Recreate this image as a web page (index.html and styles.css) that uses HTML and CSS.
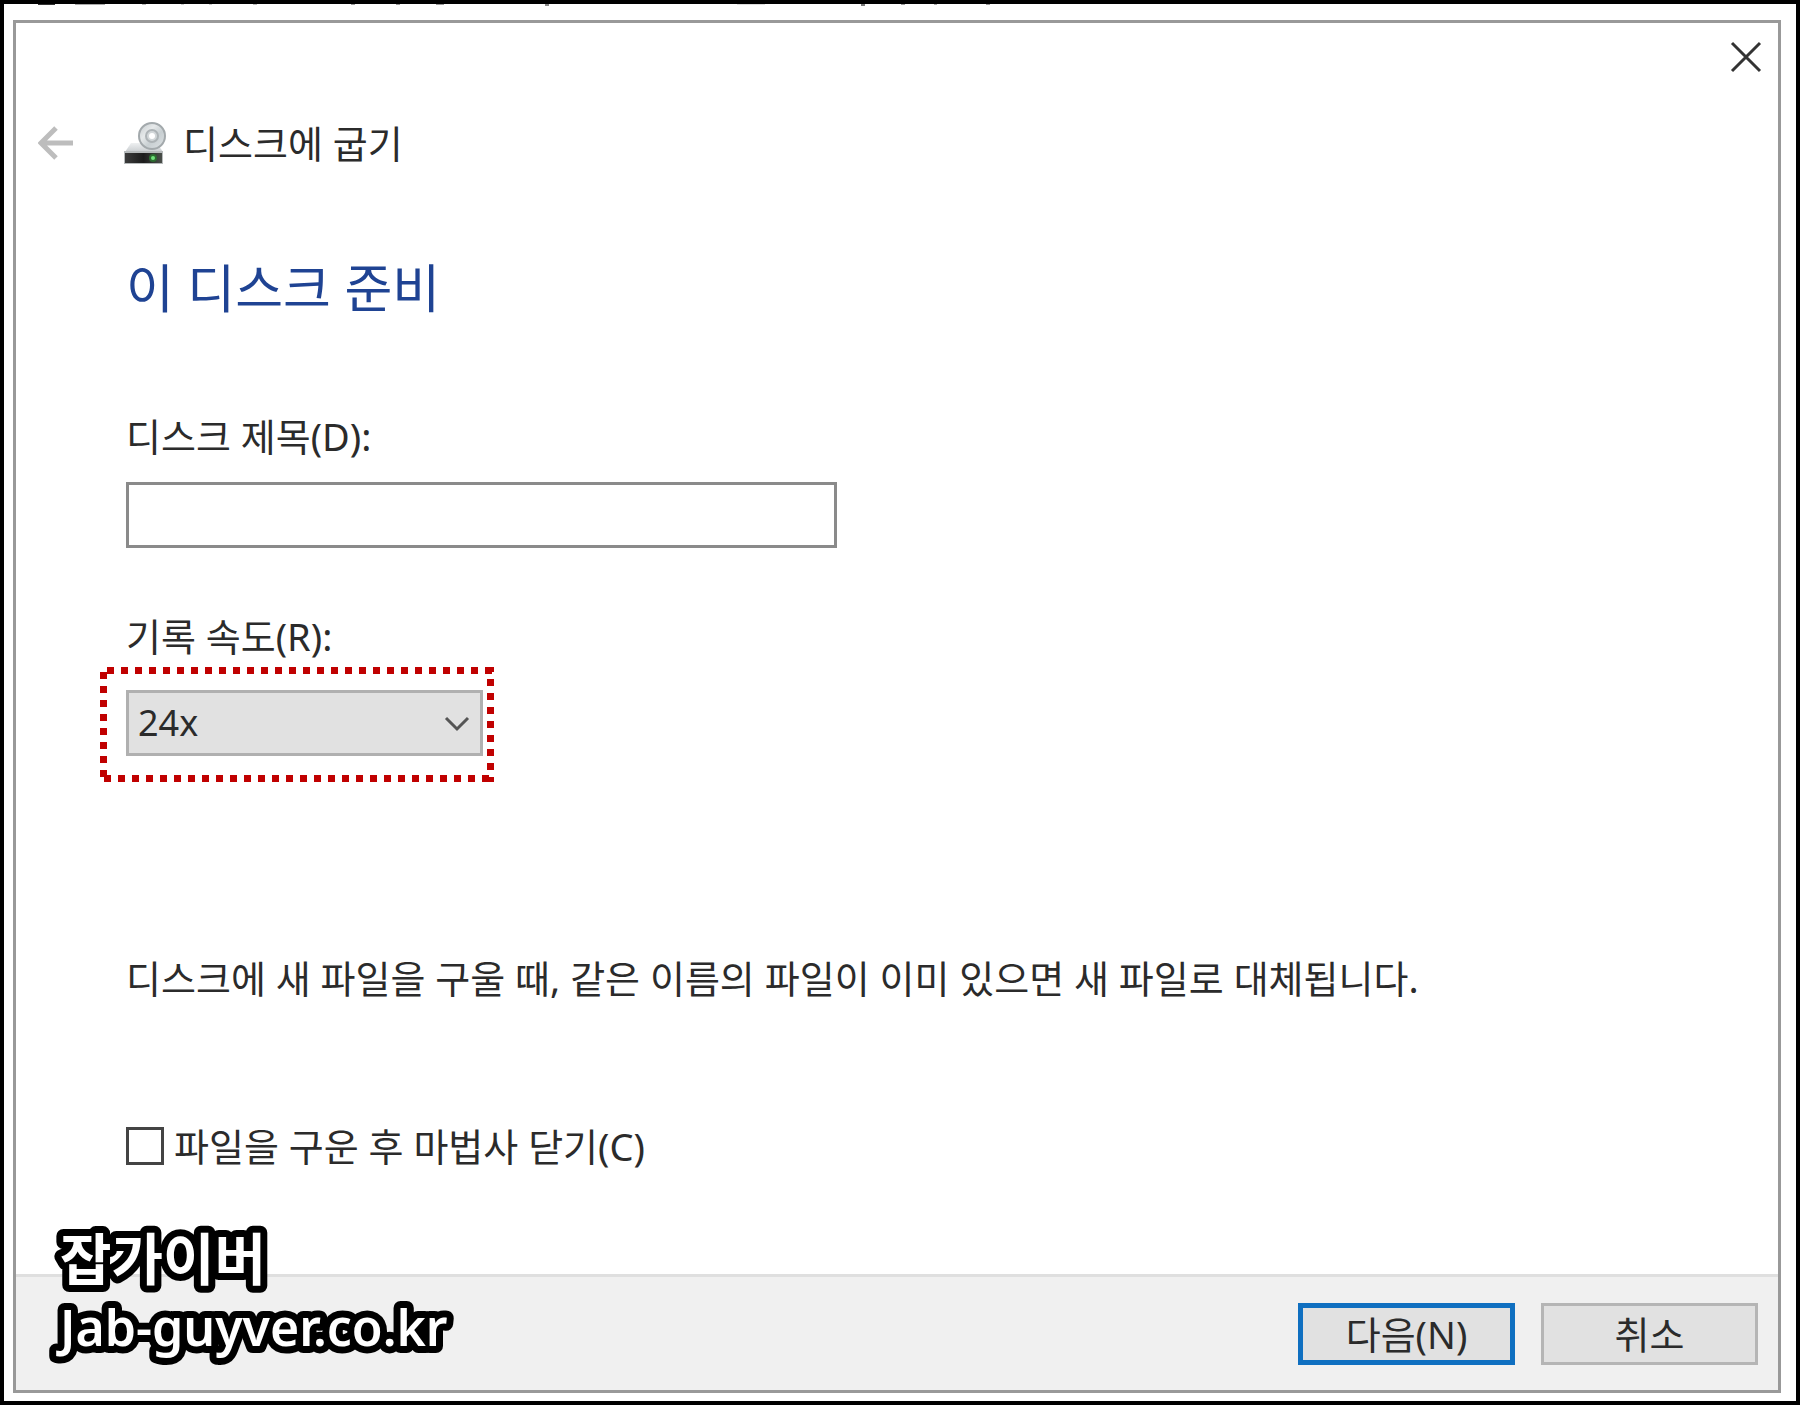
FILE: index.html
```html
<!DOCTYPE html>
<html lang="ko">
<head>
    <meta charset="UTF-8">
    <meta name="viewport" content="width=device-width, initial-scale=1.0">
    <title>디스크에 굽기</title>
    <link rel="stylesheet" href="styles.css">
</head>
<body>
    <!-- Bottom edge of the line above the dialog -->
    <svg class="cut-line" height="16" aria-hidden="true">
        <rect x="25" width="17" height="1" fill="#333"/>
        <rect x="62" width="30" height="1" fill="#aaa"/>
        <rect x="129" width="4" height="1" fill="#bbb"/>
        <rect x="168" width="3" height="1" fill="#ccc"/>
        <rect x="196" width="3" height="1" fill="#ccc"/>
        <rect x="240" width="4" height="1" fill="#bbb"/>
        <rect x="338" width="4" height="1" fill="#999"/>
        <rect x="383" width="4" height="1" fill="#999"/>
        <rect x="423" width="8" height="1" fill="#999"/>
        <rect x="532" width="4" height="2" fill="#888"/>
        <rect x="724" width="28" height="1" fill="#ddd"/>
        <rect x="848" width="4" height="2" fill="#777"/>
        <rect x="888" width="4" height="1" fill="#999"/>
        <rect x="921" width="3" height="1" fill="#aaa"/>
        <rect x="973" width="4" height="1" fill="#999"/>
    </svg>

    <!-- Dialog -->
    <main class="dialog">
        <div class="title-bar">
            <button class="close-btn" type="button" aria-label="닫기">
                <svg width="32" height="32" viewBox="0 0 32 32">
                    <path d="M2 2L30 30M30 2L2 30" stroke="#333" stroke-width="3"/>
                </svg>
            </button>
        </div>

        <header class="header">
            <button class="back-btn" type="button" aria-label="뒤로" disabled>
                <svg width="36" height="34" viewBox="0 0 36 34">
                    <path d="M35 17H3M18 2L3 17L18 32" fill="none" stroke="#bdbdbd" stroke-width="5"/>
                </svg>
            </button>
            <svg class="disc-icon" width="44" height="44" viewBox="0 0 44 44" aria-hidden="true">
                <defs>
                    <linearGradient id="driveTop" x1="0" y1="0" x2="0" y2="1">
                        <stop offset="0" stop-color="#eef0f1"/>
                        <stop offset="1" stop-color="#c9cdd0"/>
                    </linearGradient>
                    <linearGradient id="driveFront" x1="0" y1="0" x2="1" y2="0">
                        <stop offset="0" stop-color="#3c3c3c"/>
                        <stop offset="0.5" stop-color="#1c1c1c"/>
                        <stop offset="1" stop-color="#4a4f4a"/>
                    </linearGradient>
                    <linearGradient id="discFace" x1="0" y1="0" x2="1" y2="1">
                        <stop offset="0" stop-color="#c3c9cc"/>
                        <stop offset="0.35" stop-color="#e6e9ea"/>
                        <stop offset="0.6" stop-color="#c8cfd2"/>
                        <stop offset="1" stop-color="#dfe3e5"/>
                    </linearGradient>
                </defs>
                <path d="M8 22H34L40 31H2Z" fill="url(#driveTop)"/>
                <circle cx="29" cy="15" r="13" fill="url(#discFace)" stroke="#a3a9ac" stroke-width="2"/>
                <circle cx="29" cy="15" r="6" fill="#d2d7d9" stroke="#adb3b6" stroke-width="2"/>
                <circle cx="29" cy="15" r="3" fill="#fff"/>
                <rect x="1" y="30" width="39" height="13" fill="#b6babb"/>
                <rect x="2" y="32" width="37" height="10" fill="url(#driveFront)"/>
                <circle cx="30" cy="37" r="4" fill="#2c6b30"/>
                <circle cx="30" cy="37" r="2" fill="#6fe27a"/>
            </svg>
            <span class="header-title">디스크에 굽기</span>
        </header>

        <form class="content">
            <h1>이 디스크 준비</h1>

            <div class="form-group">
                <label for="discTitle">디스크 제목(D):</label>
                <input type="text" id="discTitle" class="text-input">
            </div>

            <div class="form-group speed-group">
                <label for="speed">기록 속도(R):</label>
                <div class="select-wrap">
                    <select id="speed">
                        <option>24x</option>
                    </select>
                    <svg class="chevron" width="26" height="16" viewBox="0 0 26 16" aria-hidden="true">
                        <path d="M2 2L13 13L24 2" fill="none" stroke="#555" stroke-width="3"/>
                    </svg>
                    <div class="highlight"></div>
                </div>
            </div>

            <p class="notice">디스크에 새 파일을 구울 때, 같은 이름의 파일이 이미 있으면 새 파일로 대체됩니다.</p>

            <div class="check-row">
                <input type="checkbox" id="closeWizard">
                <label for="closeWizard">파일을 구운 후 마법사 닫기(C)</label>
            </div>
        </form>

        <footer class="footer">
            <button class="btn btn-primary" type="button">다음(N)</button>
            <button class="btn" type="button">취소</button>
        </footer>

        <!-- Watermark -->
        <svg class="watermark" width="420" height="144">
            <text class="watermark-name" x="2" y="58">잡가이버</text>
            <text class="watermark-url" x="2" y="124">Jab-guyver.co.kr</text>
        </svg>
    </main>
</body>
</html>
```

FILE: styles.css
```css
/* Global Styles */
* {
    box-sizing: border-box;
    margin: 0;
    padding: 0;
}
body {
    display: flex;
    flex-direction: column;
    min-height: 100vh;
    padding: 0 15px 8px 9px;
    border: 4px solid #000;
    background-color: #fff;
    color: #2b2b2b;
    font-family: "Noto Sans", "Noto Sans CJK KR", sans-serif;
    font-size: 38px;
    line-height: 48px;
}
button, input, select {
    font: inherit;
    color: inherit;
}
svg {
    display: block;
}
.cut-line {
    width: 100%;
    flex: none;
}

/* Dialog */
.dialog {
    position: relative;
    flex: 1;
    display: flex;
    flex-direction: column;
    border: 3px solid #999;
}
.title-bar {
    display: flex;
    justify-content: flex-end;
    padding: 18px 16px 0;
}
.close-btn, .back-btn {
    border: none;
    background: none;
}

/* Header */
.header {
    display: flex;
    align-items: center;
    padding: 46px 22px 0;
}
.disc-icon {
    margin-left: 49px;
}
.header-title {
    margin-left: 16px;
}

/* Content */
.content {
    flex: 1;
    padding: 89px 110px 40px;
}
.content h1 {
    color: #1f4393;
    font-size: 52px;
    font-weight: 400;
    line-height: 64px;
    margin-bottom: 92px;
}
.form-group {
    margin-bottom: 64px;
}
.form-group label {
    display: block;
    margin-bottom: 22px;
}
.speed-group label {
    margin-bottom: 30px;
}
.text-input {
    display: block;
    width: 100%;
    max-width: 711px;
    height: 66px;
    padding: 0 12px;
    border: 3px solid #8a8a8a;
    background-color: #fff;
}
.select-wrap {
    position: relative;
    width: 357px;
}
.select-wrap select {
    display: block;
    width: 100%;
    height: 66px;
    padding: 0 9px;
    border: 3px solid #b0b0b0;
    border-radius: 0;
    background-color: #e1e1e1;
    appearance: none;
    font-size: 36px;
}
.chevron {
    position: absolute;
    top: 26px;
    right: 13px;
    pointer-events: none;
}

/* Square dots around the speed list */
.highlight {
    position: absolute;
    inset: -23px -11px -26px -26px;
    pointer-events: none;
    background:
        linear-gradient(to right, #c00000 50%, transparent 50%) 7px 0 / 14px 7px repeat-x,
        linear-gradient(to right, #c00000 50%, transparent 50%) 4px 100% / 14px 7px repeat-x,
        linear-gradient(to bottom, #c00000 50%, transparent 50%) 0 5px / 7px 14px repeat-y,
        linear-gradient(to bottom, #c00000 50%, transparent 50%) 100% 12px / 7px 14px repeat-y;
}
.notice {
    margin-top: 198px;
}
.check-row {
    display: flex;
    align-items: center;
    gap: 10px;
    margin-top: 120px;
}
.check-row input {
    appearance: none;
    width: 38px;
    height: 38px;
    border: 3px solid #444;
    background-color: #fff;
}

/* Footer */
.footer {
    display: flex;
    justify-content: flex-end;
    gap: 26px;
    padding: 26px 20px 25px;
    border-top: 3px solid #dfdfdf;
    background-color: #f0f0f0;
}
.btn {
    width: 217px;
    height: 62px;
    border: 3px solid #b5b5b5;
    background-color: #e1e1e1;
    line-height: 48px;
}
.btn-primary {
    border: 5px solid #0f6fc0;
}

/* Watermark */
.watermark {
    position: absolute;
    left: 42px;
    bottom: 24px;
    overflow: visible;
    fill: #fff;
    stroke: #000;
    stroke-width: 14px;
    stroke-linejoin: round;
    paint-order: stroke fill;
    font-weight: 600;
}
.watermark-name {
    font-size: 56px;
}
.watermark-url {
    font-size: 50px;
}
```
